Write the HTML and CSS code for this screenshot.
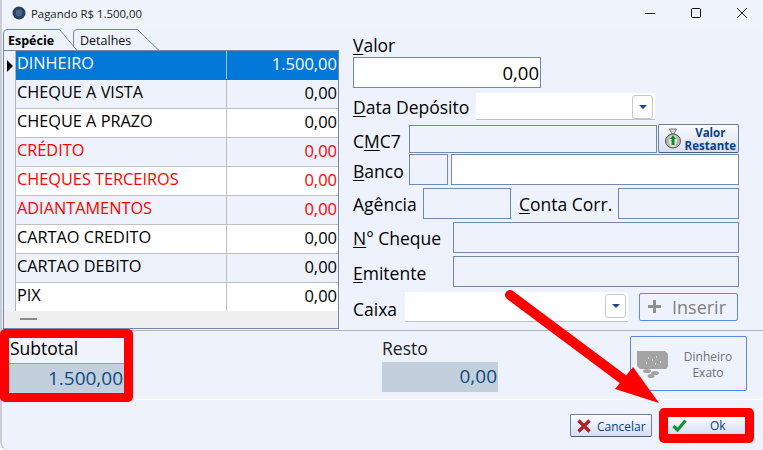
FILE: index.html
```html
<!DOCTYPE html>
<html lang="pt-BR">
<head>
<meta charset="utf-8">
<title>Pagando R$ 1.500,00</title>
<link rel="stylesheet" href="styles.css">
</head>
<body>
<div class="window">
  <header class="titlebar">
    <svg class="appicon" width="14" height="14" viewBox="0 0 14 14"><circle cx="7" cy="7" r="6.5" fill="#27405f"/><circle cx="7" cy="7" r="3.4" fill="#4a6387"/></svg>
    <span class="title">Pagando R$ 1.500,00</span>
    <div class="winbtns">
      <svg width="10" height="10" viewBox="0 0 10 10"><path d="M0 5.5h10" stroke="#222" fill="none"/></svg>
      <svg width="10" height="10" viewBox="0 0 10 10"><rect x=".5" y=".5" width="9" height="9" rx="1" stroke="#111" fill="none"/></svg>
      <svg width="10" height="10" viewBox="0 0 10 10"><path d="M0 0l10 10M10 0L0 10" stroke="#222" fill="none"/></svg>
    </div>
  </header>

  <main class="content">
    <section class="left">
      <div class="tabs">
        <svg class="tabline" width="160" height="23" viewBox="0 0 160 23"><path d="M70.500 22V5Q70.500 1.500 74 1.500H134.500L156 22.500H75" fill="#eef2fc" stroke="#7488ab"/><path d="M0.500 22V5Q0.500 2 4 1.500L56.500 1.500L74 22.500H0.500" fill="#eef2fc"/><path d="M0.500 22V5Q0.500 2 4 1.500L56.500 1.500L74 22.500" fill="none" stroke="#7488ab"/></svg>
        <div class="tab tab-active">Espécie</div>
        <div class="tab tab-second">Detalhes</div>
      </div>
      <div class="grid">
        <div class="row row-sel"><span class="ind"><svg width="6" height="12" viewBox="0 0 6 12"><path d="M0 0l6 6-6 6z" fill="#000"/></svg></span><span class="name">DINHEIRO</span><span class="val">1.500,00</span></div>
        <div class="row row-alt"><span class="ind"></span><span class="name">CHEQUE A VISTA</span><span class="val">0,00</span></div>
        <div class="row"><span class="ind"></span><span class="name">CHEQUE A PRAZO</span><span class="val">0,00</span></div>
        <div class="row row-alt row-red"><span class="ind"></span><span class="name">CRÉDITO</span><span class="val">0,00</span></div>
        <div class="row row-red"><span class="ind"></span><span class="name">CHEQUES TERCEIROS</span><span class="val">0,00</span></div>
        <div class="row row-alt row-red"><span class="ind"></span><span class="name">ADIANTAMENTOS</span><span class="val">0,00</span></div>
        <div class="row"><span class="ind"></span><span class="name">CARTAO CREDITO</span><span class="val">0,00</span></div>
        <div class="row row-alt"><span class="ind"></span><span class="name">CARTAO DEBITO</span><span class="val">0,00</span></div>
        <div class="row"><span class="ind"></span><span class="name">PIX</span><span class="val">0,00</span></div>
        <div class="gridfoot"><span class="dash"></span></div>
      </div>
    </section>

    <section class="form">
      <div class="lbl lbl-valor"><u>V</u>alor</div>
      <div class="field f-valor">0,00</div>
      <div class="frow r-data">
        <span class="lbl w-data"><u>D</u>ata Depósito</span>
        <div class="combo c-data"><span class="dropbtn"><i class="caret"></i></span></div>
      </div>
      <div class="frow r-cmc">
        <span class="lbl w-cmc">C<u>M</u>C7</span>
        <div class="field f-cmc"></div>
        <button class="btn-rest" type="button">
          <svg width="18" height="21" viewBox="0 0 18 21"><path d="M5.500 1h7l-2.500 5h-2z" fill="#d8d8d0" stroke="#555" stroke-width=".8"/><ellipse cx="9" cy="13" rx="7.500" ry="7" fill="#b9b9ae" stroke="#555"/><ellipse cx="9" cy="13" rx="4" ry="6" fill="#dfe6d8"/><path d="M9 7l3 4h-1.500v6h-3v-6H6z" fill="#0c8a2c"/></svg>
          <span>Valor<br>Restante</span>
        </button>
      </div>
      <div class="frow r-banco">
        <span class="lbl w-cmc"><u>B</u>anco</span>
        <div class="field f-banco"></div>
        <div class="field white grow"></div>
      </div>
      <div class="frow r-ag">
        <span class="lbl w-ag">A<u>g</u>ência</span>
        <div class="field f-ag"></div>
        <span class="lbl w-conta"><u>C</u>onta Corr.</span>
        <div class="field grow"></div>
      </div>
      <div class="frow r-ag">
        <span class="lbl w-ch"><u>N</u>° Cheque</span>
        <div class="field grow"></div>
      </div>
      <div class="frow r-em">
        <span class="lbl w-ch"><u>E</u>mitente</span>
        <div class="field grow"></div>
      </div>
      <div class="frow r-caixa">
        <span class="lbl w-cx">Caixa</span>
        <div class="combo c-cx"><span class="dropbtn"><i class="caret"></i></span></div>
        <button class="btn-ins" type="button">
          <svg width="13" height="13" viewBox="0 0 13 13"><path d="M5 0h3v5h5v3H8v5H5V8H0V5h5z" fill="#8f8f8f"/></svg>
          <span>Inserir</span>
        </button>
      </div>
    </section>
  </main>

  <section class="totals">
    <div class="total t-sub">
      <div class="t-lbl t-lbl-sub">Subtotal</div>
      <div class="t-val t-val-sub">1.500,00</div>
    </div>
    <div class="total t-rest">
      <div class="t-lbl">Resto</div>
      <div class="t-val">0,00</div>
    </div>
    <button class="btn-exato" type="button">
      <svg width="33" height="28" viewBox="0 0 33 28"><path d="M1 1h28l3 3v13l-2 2H4l-3-3z" fill="#a3a3a3"/><path d="M12 8h1M16 10h1M20 7h1M24 12h1M10 13h1M19 14h1" stroke="#e8e8e8" stroke-width="1.500"/><ellipse cx="11" cy="21" rx="4" ry="2" fill="#a3a3a3"/><ellipse cx="19" cy="23" rx="4" ry="2" fill="#a3a3a3"/><ellipse cx="15" cy="26" rx="3.500" ry="2" fill="#a3a3a3"/></svg>
      <span>Dinheiro<br>Exato</span>
    </button>
  </section>

  <footer class="actions">
    <button class="btn-cancel" type="button">
      <svg width="14" height="14" viewBox="0 0 14 14"><path d="M1.500 1.500l11 11M12.500 1.500l-11 11" stroke="#b3202a" stroke-width="3.400" fill="none"/></svg>
      <span>Cancelar</span>
    </button>
    <div class="ok-mark">
      <button class="btn-ok" type="button">
        <svg width="15" height="13" viewBox="0 0 15 13"><path d="M1.500 7l4 4 8-9.500" stroke="#12962c" stroke-width="3.200" fill="none"/></svg>
        <span>Ok</span>
      </button>
    </div>
  </footer>

  <svg class="arrow" width="763" height="450" viewBox="0 0 763 450"><path d="M510 295L632 386" stroke="#f00" stroke-width="10" stroke-linecap="round" fill="none"/><path d="M659 403L633 367 615 389z" fill="#f00"/></svg>
</div>
</body>
</html>
```
FILE: styles.css
```css
* { box-sizing: border-box; }
html, body { margin: 0; padding: 0; }
body { width: 763px; height: 450px; overflow: hidden; background: #fff; }
.window {
  position: relative; width: 763px; height: 450px; background: #eef2fc;
  border-left: 2px solid #c9ccd3; border-radius: 0 0 0 8px;
  font-family: "Open Sans", "Noto Sans", sans-serif; color: #000;
  display: flex; flex-direction: column;
}
.titlebar { height: 27px; display: flex; align-items: center; padding-left: 10px; padding-bottom: 1px; background: #eff3fa; flex: none; }
.appicon { flex: none; }
.title { margin-left: 5px; font-size: 11.4px; color: #222; }
.winbtns { margin-left: auto; display: flex; gap: 36px; padding-right: 16px; align-items: center; }

.content { display: flex; height: 304px; flex: none; border-bottom: 1px solid #b0b3ba; }
.left { width: 337px; margin-left: 1px; flex: none; padding-top: 2px; }
.tabs { display: flex; height: 21px; position: relative; }
.tabline { position: absolute; left: 0; top: -1px; }
.tab { font-size: 12.500px; padding: 3px 0 0 5px; position: relative; }
.tab-active { width: 66px; font-weight: 700; }
.tab-second { padding-left: 11px; color: #111; }
.grid { border: 1px solid #7488ab; height: 279px; background: #fff; width: 336px; position: relative; }
.row { display: flex; height: 29px; font-size: 16.300px; line-height: 25px; border-bottom: 1px solid #c0c0c0; background: #fff; }
.row-alt { background: #eef2fc; }
.ind { width: 8px; flex: none; display: flex; align-items: center; padding-left: 3px; margin-bottom: -1px; background: #eef2fc; border-right: 1px solid #b5b5b5; box-sizing: content-box; }
.name { width: 211px; flex: none; padding-left: 1px; border-right: 1px solid #c0c0c0; white-space: nowrap; }
.val { flex: 1; text-align: right; padding-right: 1px; font-size: 16.500px; }
.row-sel { background: #0078d7; border-bottom-color: #0078d7; color: #fff; }
.row-sel .name { border-right-color: #9cc0e0; }
.row-red { color: #f00; }
.gridfoot { height: 17px; margin-top: -1px; background: #efefef; padding: 7px 0 0 16px; position: relative; }
.dash { display: block; width: 17px; height: 2px; background: #8a8a8a; }

.form { width: 386px; margin-left: 13px; flex: none; padding-top: 7px; }
.lbl { font-size: 17.500px; line-height: 22px; white-space: nowrap; flex: none; }
.lbl u { text-decoration-thickness: 1px; text-underline-offset: 2px; }
.field { border: 1px solid #7488ab; height: 31px; background: #eef2fc; }
.white { background: #fff; }
.grow { flex: 1; }
.f-valor { width: 188px; margin-top: 1px; background: #fff; font-size: 18.500px; text-align: right; line-height: 29px; padding-right: 1px; }
.frow { display: flex; align-items: center; }
.r-data { margin-top: 5px; height: 27px; }
.w-data { width: 123px; }
.combo { background: #fff; height: 27px; position: relative; border-bottom: 1px solid #bfc2c8; }
.c-data { width: 179px; }
.c-cx { width: 223px; height: 30px; }
.dropbtn { position: absolute; right: 2px; top: 2px; width: 21px; height: 24px; border: 1px solid #c5c8cf; border-radius: 3px; background: #fff; display: flex; align-items: center; justify-content: center; }
.caret { display: block; border: 4px solid transparent; border-top: 4px solid #1d4a80; border-bottom: 0; }
.r-cmc { margin-top: 4px; height: 29px; }
.r-cmc .lbl { padding-top: 4px; }
.w-cmc { width: 56px; }
.f-cmc { width: 248px; height: 28px; }
.btn-rest { width: 81px; height: 29px; margin-left: 1px; padding: 0 2px 0 5px; border: 1px solid #6f7f98; border-bottom-color: #4a5c78; border-radius: 2px; background: linear-gradient(#fafbff, #d5def2); display: flex; align-items: center; justify-content: space-between; font: 700 11.500px/13px "Open Sans", sans-serif; color: #0a3f7e; text-align: center; }
.r-banco { margin-top: 1px; height: 31px; gap: 3px; }
.r-banco .w-cmc { margin-right: -3px; padding-top: 2px; }
.f-banco { width: 39px; }
.r-ag { margin-top: 3px; height: 31px; }
.r-ag .lbl { padding-top: 1px; }
.r-em { margin-top: 3px; height: 31px; }
.r-em .lbl { padding-top: 2px; }
.w-ag { width: 70px; }
.f-ag { width: 88px; }
.w-conta { width: 107px; padding-left: 8px; }
.w-ch { width: 100px; }
.r-caixa { margin-top: 4px; height: 31px; }
.r-caixa .lbl { padding-top: 5px; }
.w-cx { width: 52px; }
.btn-ins { width: 99px; height: 28px; margin-left: 11px; border: 1px solid #5b8ae6; border-radius: 2px; background: #eef2fc; display: flex; align-items: center; gap: 11px; padding: 0 0 0 8px; font: 18px "Open Sans", sans-serif; color: #808080; }

.totals { height: 69px; flex: none; border-bottom: 1px solid #fff; display: flex; position: relative; }
.total { width: 116px; flex: none; margin-top: 6px; }
.t-lbl { height: 25px; font-size: 17.500px; line-height: 21px; padding-left: 1px; white-space: nowrap; }
.t-val { height: 30px; background: #c3cfdc; color: #0e4a82; font-size: 19px; line-height: 28px; text-align: right; padding-right: 1px; }
.t-lbl-sub { border-bottom: 1px solid #f08a1d; height: 26px; background: #f1f4fb; }
.t-sub .t-val { height: 29px; }
.t-rest .t-lbl { color: #222; line-height: 23px; padding-left: 0; }
.t-sub { box-sizing: content-box; border: 9px solid #f00; border-radius: 5px; margin: -2px 0 0 -2px; width: 115px; height: 55px; }
.t-rest { margin-left: 249px; }
.btn-exato { position: absolute; left: 628px; top: 5px; width: 117px; height: 55px; border: 1px solid #5b8ae6; border-radius: 2px; background: #eef2fc; display: flex; align-items: center; padding: 0 0 0 5px; gap: 14px; font: 12px/16px "Open Sans", sans-serif; color: #6f6f6f; }
.btn-exato span { width: 50px; text-align: center; padding-top: 2px; }

.actions { flex: 1; display: flex; align-items: flex-start; position: relative; }
.btn-cancel { width: 82px; height: 23px; margin: 14px 0 0 568px; padding: 0 0 0 6px; border: 1px solid #6f7f98; border-bottom-color: #4a5c78; border-radius: 2px; background: linear-gradient(#fafbff, #d5def2); display: flex; align-items: center; gap: 6px; font: 12px "Open Sans", sans-serif; color: #0a3f7e; }
.btn-cancel span { padding-top: 2px; }
.ok-mark { margin: 8px 0 0 7px; border: 9px solid #f00; border-radius: 5px; }
.btn-ok { display: flex; align-items: center; width: 77px; height: 17px; border: 0; padding: 0 0 0 4px; background: linear-gradient(#fafbff, #d5def2); font: 12px "Open Sans", sans-serif; color: #0a3f7e; }
.btn-ok span { margin-left: 23px; }
.arrow { position: absolute; left: -2px; top: 0; pointer-events: none; }
```
